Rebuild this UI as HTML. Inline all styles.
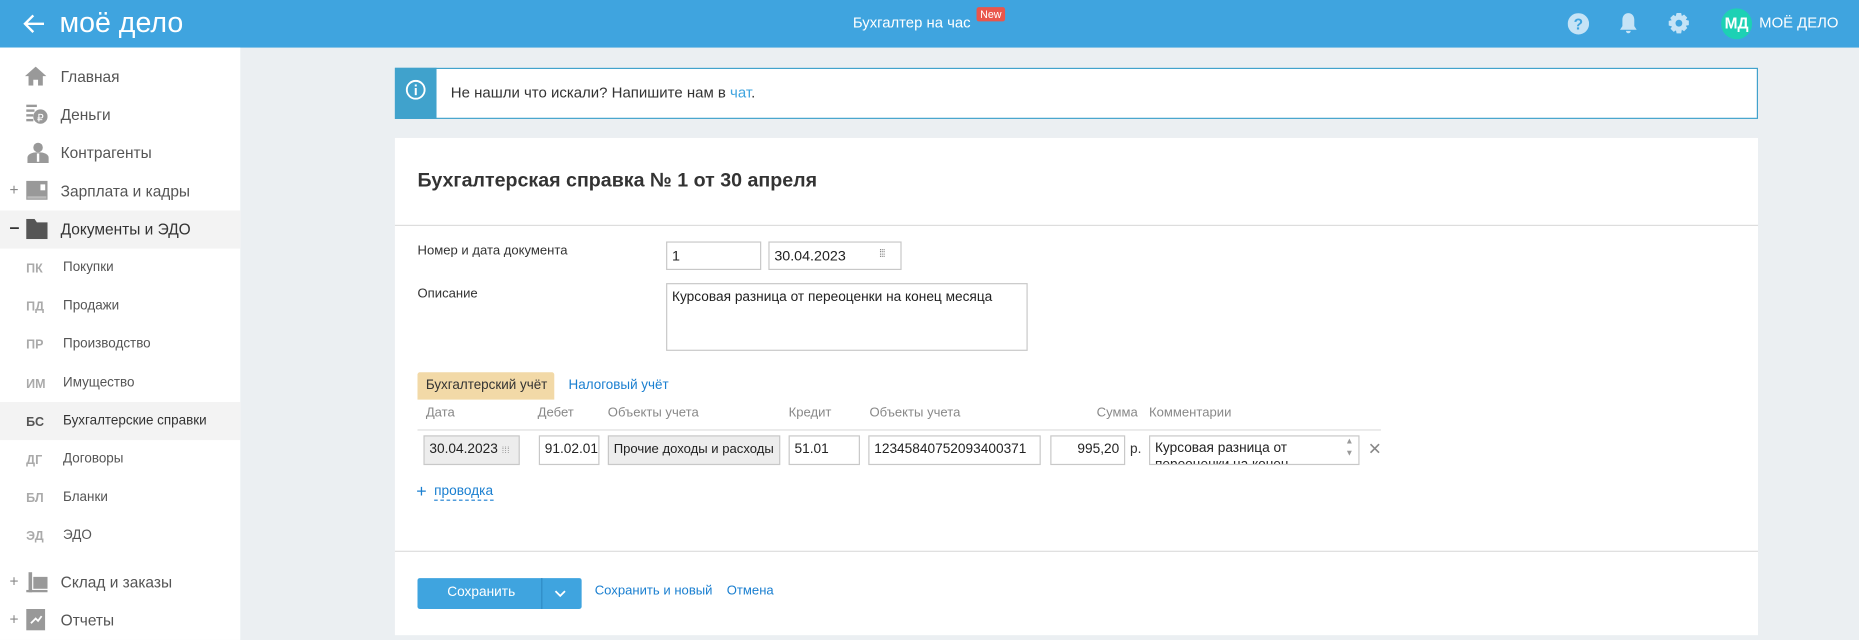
<!DOCTYPE html>
<html><head><meta charset="utf-8"><style>
html,body{margin:0;padding:0;width:1859px;height:640px;overflow:hidden;background:#ebeff2}
#w{position:absolute;left:0;top:0;width:1563px;height:538px;transform:scale(1.18944);transform-origin:0 0;font-family:"Liberation Sans",Arial,sans-serif;color:#333}
.a{position:absolute;white-space:nowrap}
.hdr{left:0;top:0;width:1563px;height:40px;background:#3fa4df}
.side{left:0;top:40px;width:202px;height:498px;background:#fff}
.mi{font-size:13px;color:#555}
.si{font-size:11.3px;color:#555}
.code{font-size:10.5px;font-weight:bold;color:#aaa}
.in{position:absolute;border:1px solid #c8c8c8;background:#fff;font-size:12px;box-sizing:border-box;padding:0 4px;line-height:22px;color:#222;white-space:nowrap;overflow:hidden}
.th{font-size:11px;color:#888;top:341px}
</style></head><body><div id="w">
<div class="a hdr"></div>
<svg class="a" style="left:19px;top:11px" width="20" height="18" viewBox="0 0 20 18"><path d="M9 2 2 9l7 7M2 9h16" fill="none" stroke="#fff" stroke-width="2"/></svg>
<div class="a" style="left:50px;top:6px;font-size:24px;color:#fff">моё дело</div>
<div class="a" style="left:717px;top:12px;font-size:12.5px;color:#fff">Бухгалтер на час</div>
<div class="a" style="left:821px;top:6px;background:#e9564c;color:#fff;font-size:9px;padding:1px 3px;border-radius:2px">New</div>
<svg class="a" style="left:1318px;top:11px" width="18" height="18"><circle cx="9" cy="9" r="9" fill="#c5e3f6"/><text x="9" y="14" font-size="13" font-weight="bold" text-anchor="middle" fill="#3fa4df" font-family="Liberation Sans">?</text></svg>
<svg class="a" style="left:1361px;top:10px" width="16" height="20"><path d="M8 1c-3 0-5 2.5-5 5.5V12l-2 3h14l-2-3V6.5C13 3.5 11 1 8 1zM6 16h4a2 2 0 0 1-4 0z" fill="#c5e3f6"/></svg>
<svg class="a" style="left:1402px;top:10px" width="19" height="19" viewBox="0 0 20 20"><path d="M8 1h4l.6 2.6 2-1.3 2.8 2.8-1.3 2 2.7.6v4l-2.7.6 1.3 2-2.8 2.8-2-1.3L12 19H8l-.6-2.6-2 1.3-2.8-2.8 1.3-2L1 12V8l2.6-.6-1.3-2 2.8-2.8 2 1.3z" fill="#c5e3f6"/><circle cx="10" cy="10" r="3" fill="#3fa4df"/></svg>
<div class="a" style="left:1447px;top:7px;width:26px;height:26px;border-radius:13px;background:#1dd1b4;color:#fff;font-weight:bold;font-size:13px;text-align:center;line-height:26px">МД</div>
<div class="a" style="left:1479px;top:12px;font-size:12.5px;color:#fff">МОЁ ДЕЛО</div>

<div class="a side"></div>
<div class="a" style="left:0;top:177px;width:202px;height:32px;background:#f3f3f3"></div>
<div class="a" style="left:0;top:338px;width:202px;height:32px;background:#f3f3f3"></div>
<svg class="a" style="left:21px;top:56px" width="18" height="16"><path d="M9 0 0 8h3v8h4v-5h4v5h4V8h3z" fill="#999"/></svg>
<svg class="a" style="left:22px;top:87px" width="18" height="18"><rect x="0" y="1" width="9" height="2" fill="#999"/><rect x="0" y="5" width="7" height="2" fill="#999"/><rect x="0" y="9" width="6" height="2" fill="#999"/><rect x="0" y="13" width="6" height="2" fill="#999"/><circle cx="12" cy="11" r="6" fill="#999"/><text x="12" y="15" font-size="9" text-anchor="middle" fill="#fff">₽</text></svg>
<svg class="a" style="left:23px;top:119px" width="18" height="18"><circle cx="9" cy="5" r="4" fill="#999"/><path d="M0 18v-4c0-3 3-5 9-5s9 2 9 5v4z" fill="#999"/><rect x="8" y="10" width="2" height="7" fill="#fff"/></svg>
<svg class="a" style="left:22px;top:152px" width="18" height="16"><rect width="18" height="16" fill="#999"/><rect x="12" y="3" width="4" height="5" fill="#fff"/><rect x="1" y="13" width="16" height="2" fill="#bbb"/></svg>
<svg class="a" style="left:22px;top:184px" width="18" height="17"><path d="M0 0h7l2 3h9v14H0z" fill="#555"/></svg>
<svg class="a" style="left:22px;top:481px" width="18" height="17"><rect x="2" y="0" width="3" height="17" fill="#999"/><rect x="6" y="4" width="12" height="10" fill="#999"/><rect x="0" y="15" width="18" height="2" fill="#999"/></svg>
<svg class="a" style="left:22px;top:512px" width="16" height="18"><rect width="16" height="18" fill="#999"/><path d="M4 12 8 8l2 2 3-4" stroke="#fff" fill="none" stroke-width="1.5"/></svg>
<div class="a" style="left:8px;top:152px;font-size:13px;color:#888">+</div>
<div class="a" style="left:8px;top:183px;font-size:15px;color:#333;font-weight:bold">–</div>
<div class="a" style="left:8px;top:481px;font-size:13px;color:#888">+</div>
<div class="a" style="left:8px;top:513px;font-size:13px;color:#888">+</div>
<div class="a mi" style="left:51px;top:57px">Главная</div>
<div class="a mi" style="left:51px;top:89px">Деньги</div>
<div class="a mi" style="left:51px;top:121px">Контрагенты</div>
<div class="a mi" style="left:51px;top:153px">Зарплата и кадры</div>
<div class="a mi" style="left:51px;top:185px;color:#333">Документы и ЭДО</div>
<div class="a mi" style="left:51px;top:482px">Склад и заказы</div>
<div class="a mi" style="left:51px;top:514px">Отчеты</div>
<div class="a code" style="left:22px;top:220px">ПК</div><div class="a si" style="left:53px;top:219px">Покупки</div>
<div class="a code" style="left:22px;top:252px">ПД</div><div class="a si" style="left:53px;top:251px">Продажи</div>
<div class="a code" style="left:22px;top:284px">ПР</div><div class="a si" style="left:53px;top:283px">Производство</div>
<div class="a code" style="left:22px;top:317px">ИМ</div><div class="a si" style="left:53px;top:316px">Имущество</div>
<div class="a code" style="left:22px;top:349px;color:#555">БС</div><div class="a si" style="left:53px;top:348px;color:#333">Бухгалтерские справки</div>
<div class="a code" style="left:22px;top:381px">ДГ</div><div class="a si" style="left:53px;top:380px">Договоры</div>
<div class="a code" style="left:22px;top:413px">БЛ</div><div class="a si" style="left:53px;top:412px">Бланки</div>
<div class="a code" style="left:22px;top:445px">ЭД</div><div class="a si" style="left:53px;top:444px">ЭДО</div>

<div class="a" style="left:332px;top:57px;width:1144px;height:41px;background:#fff;border:1px solid #40a2cc"></div>
<div class="a" style="left:332px;top:57px;width:35px;height:43px;background:#40a2cc"></div>
<svg class="a" style="left:341px;top:67px" width="17" height="17"><circle cx="8.5" cy="8.5" r="7.5" fill="none" stroke="#fff" stroke-width="1.6"/><rect x="7.7" y="7" width="1.7" height="6" fill="#fff"/><rect x="7.7" y="4" width="1.7" height="1.7" fill="#fff"/></svg>
<div class="a" style="left:379px;top:71px;font-size:12.6px;color:#333">Не нашли что искали? Напишите нам в <span style="color:#3fa4df">чат</span>.</div>

<div class="a" style="left:332px;top:116px;width:1146px;height:418px;background:#fff"></div>
<div class="a" style="left:351px;top:143px;font-size:16.5px;font-weight:bold;color:#333">Бухгалтерская справка № 1 от 30 апреля</div>
<div class="a" style="left:332px;top:189px;width:1146px;height:1px;background:#ddd"></div>
<div class="a" style="left:351px;top:205px;font-size:11px">Номер и дата документа</div>
<div class="in" style="left:560px;top:203px;width:80px;height:24px">1</div>
<div class="in" style="left:646px;top:203px;width:112px;height:24px">30.04.2023</div>
<div class="a" style="left:739px;top:208px;font-size:9px;color:#888;letter-spacing:-1px">⁞⁞⁞</div>
<div class="a" style="left:351px;top:241px;font-size:11px">Описание</div>
<div class="in" style="left:560px;top:238px;width:304px;height:57px;line-height:18px;padding-top:2px;font-size:11.5px">Курсовая разница от переоценки на конец месяца</div>

<div class="a" style="left:351px;top:313px;width:115px;height:23px;background:#f2d9a7;border-radius:2px 2px 0 0"></div>
<div class="a" style="left:358px;top:318px;font-size:11.3px;color:#333">Бухгалтерский учёт</div>
<div class="a" style="left:478px;top:318px;font-size:11.3px;color:#1a7fd0">Налоговый учёт</div>
<div class="a th" style="left:358px">Дата</div>
<div class="a th" style="left:452px">Дебет</div>
<div class="a th" style="left:511px">Объекты учета</div>
<div class="a th" style="left:663px">Кредит</div>
<div class="a th" style="left:731px">Объекты учета</div>
<div class="a th" style="left:922px">Сумма</div>
<div class="a th" style="left:966px">Комментарии</div>
<div class="a" style="left:351px;top:361px;width:810px;height:1px;background:#ddd"></div>
<div class="in" style="left:356px;top:366px;width:81px;height:25px;background:#ededed;font-size:11.5px">30.04.2023 <span style="font-size:8px;color:#999">⁞⁞⁞</span></div>
<div class="in" style="left:453px;top:366px;width:51px;height:25px;font-size:11.5px">91.02.01</div>
<div class="in" style="left:511px;top:366px;width:145px;height:25px;background:#ededed;font-size:11px">Прочие доходы и расходы</div>
<div class="in" style="left:663px;top:366px;width:60px;height:25px;font-size:11.5px">51.01</div>
<div class="in" style="left:730px;top:366px;width:145px;height:25px;font-size:11.5px">12345840752093400371</div>
<div class="in" style="left:883px;top:366px;width:63px;height:25px;text-align:right;font-size:11.5px">995,20</div>
<div class="a" style="left:950px;top:372px;font-size:11.5px">р.</div>
<div class="in" style="left:966px;top:366px;width:177px;height:25px;line-height:14px;padding-top:3px;white-space:normal;padding-right:20px;font-size:11.5px">Курсовая разница от переоценки на конец месяца</div>
<div class="a" style="left:1131px;top:367px;font-size:7px;color:#999;line-height:10px">▲<br>▼</div>
<div class="a" style="left:1150px;top:369px;font-size:14px;color:#888">✕</div>
<div class="a" style="left:350px;top:405px;font-size:15px;color:#1a7fd0">+</div>
<div class="a" style="left:365px;top:407px;font-size:11.5px;color:#1a7fd0;border-bottom:1px dashed #1a7fd0;line-height:13px">проводка</div>
<div class="a" style="left:332px;top:463px;width:1146px;height:1px;background:#ddd"></div>
<div class="a" style="left:351px;top:486px;width:138px;height:26px;background:#3fa4df;border-radius:2px"></div>
<div class="a" style="left:455px;top:486px;width:1px;height:26px;background:#2f8cc4"></div>
<div class="a" style="left:376px;top:492px;font-size:11.5px;color:#fff">Сохранить</div>
<svg class="a" style="left:466px;top:496px" width="10" height="6"><path d="M1 1l4 4 4-4" stroke="#fff" fill="none" stroke-width="1.5"/></svg>
<div class="a" style="left:500px;top:491px;font-size:11px;color:#1a7fd0">Сохранить и новый</div>
<div class="a" style="left:611px;top:491px;font-size:11px;color:#1a7fd0">Отмена</div>
</div></body></html>
